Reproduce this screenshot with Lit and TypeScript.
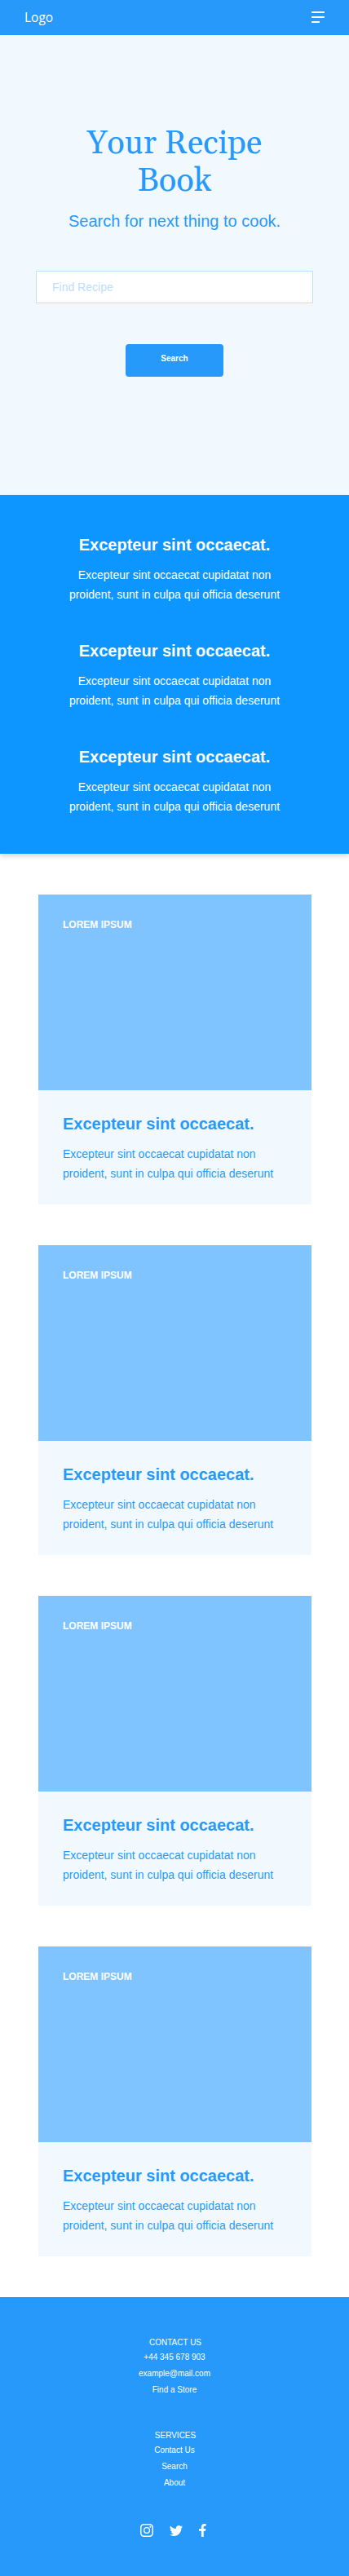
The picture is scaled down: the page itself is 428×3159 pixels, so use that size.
import { LitElement, html, css, svg } from "lit";
import { customElement } from "lit/decorators.js";

const HEADING = "Excepteur sint occaecat.";
const BODY = "Excepteur sint occaecat cupidatat non proident, sunt in culpa qui officia deserunt";

const linkGroups = [
  { title: "CONTACT US", links: ["+44 345 678 903", "example@mail.com", "Find a Store"] },
  { title: "SERVICES", links: ["Contact Us", "Search", "About"] },
];

const instagram = svg`<rect x="0.75" y="0.75" width="14.5" height="14.5" rx="3.9" fill="none" stroke="#fff" stroke-width="1.5"/><circle cx="8" cy="8" r="3.4" fill="none" stroke="#fff" stroke-width="1.4"/><circle cx="12.3" cy="3.7" r="1" fill="#fff"/>`;
const twitter = svg`<path fill="#fff" d="M16 3.54a6.6 6.6 0 0 1-1.89.52 3.3 3.3 0 0 0 1.44-1.82 6.6 6.6 0 0 1-2.08.8A3.28 3.28 0 0 0 7.88 6.03 9.32 9.32 0 0 1 1.11 2.6a3.28 3.28 0 0 0 1.02 4.38 3.3 3.3 0 0 1-1.49-.41v.04a3.28 3.28 0 0 0 2.63 3.22 3.3 3.3 0 0 1-1.48.06 3.28 3.28 0 0 0 3.07 2.28A6.6 6.6 0 0 1 0 13.52a9.3 9.3 0 0 0 5.03 1.48c6.04 0 9.34-5 9.34-9.34l-.01-.42A6.7 6.7 0 0 0 16 3.54z"/>`;
const facebook = svg`<path fill="#fff" d="M8.1 2.66h1.46V.11A18.9 18.9 0 0 0 7.43 0C5.33 0 3.88 1.33 3.88 3.76V6H1v2.86h2.88V16h2.84V8.86h2.36L9.44 6H6.72V4.04c0-.83.22-1.38 1.38-1.38z"/>`;

const socialIcons = [
  { icon: instagram, left: 0, width: 16 },
  { icon: twitter, left: 0, width: 16 },
  { icon: facebook, left: 1, width: 12 },
];

@customElement("app-root")
export class AppRoot extends LitElement {
  static styles = css`
    :host { display: block; background: #fff; font-family: "Liberation Sans", Arial, sans-serif; }
    * { box-sizing: border-box; }
    h1, h2, h3, p, ul { margin: 0; padding: 0; }
    svg { display: block; }
    .bar { height: 43px; padding: 0 30px 1px; display: flex; justify-content: space-between; align-items: center; background: #2699fb; }
    .logo { color: #fff; font: 15.5px/22px "Open Sans", "Noto Sans", sans-serif; }
    .hero { height: 564px; padding: 111px 44px 0; background: #f1f9ff; color: #2699fb; display: flex; flex-direction: column; align-items: center; text-align: center; }
    .title { width: 250px; font: 400 40px/46px Gelasio, Georgia, "Liberation Serif", serif; }
    .subtitle { margin-top: 13px; font-size: 20px; line-height: 24px; }
    .field { margin-top: 49px; width: 340px; height: 40px; padding: 0 19px; border: 1px solid #bce0fd; border-radius: 0; background: #fff; font: 14px "Liberation Sans", Arial, sans-serif; outline: none; }
    .field::placeholder { color: #bce0fd; opacity: 1; }
    .button { margin-top: 50px; width: 120px; height: 40px; padding: 0 0 4px; border: 0; border-radius: 4px; background: #2699fb; color: #fff; font: bold 10px/12px "Liberation Sans", Arial, sans-serif; display: block; text-align: center; }
    .features { height: 440px; padding-top: 49px; background: #0d96ff; color: #fff; display: flex; flex-direction: column; align-items: center; gap: 45px; text-align: center; box-shadow: 0 3px 6px rgba(0, 0, 0, 0.16); }
    .copy { width: 275px; display: flex; flex-direction: column; gap: 13px; }
    .heading { font-size: 20px; line-height: 24px; font-weight: 700; }
    .text { font-size: 14px; line-height: 24px; }
    .cards { padding: 50px 46px 50px 47px; display: flex; flex-direction: column; gap: 50px; }
    .picture { height: 240px; padding: 30px; background: #7fc4ff; color: #fff; font-size: 12px; line-height: 14px; font-weight: 700; }
    .details { height: 140px; padding: 29px 30px; background: #f1f9ff; color: #2699fb; }
    .footer { height: 342px; padding-top: 50px; background: #2699fb; color: #fff; display: flex; flex-direction: column; align-items: center; font-size: 10px; text-align: center; }
    .group { height: 114px; }
    .group-title { padding-left: 2px; font-size: 10px; line-height: 12px; font-weight: 400; }
    .links { list-style: none; margin-top: 2px; line-height: 20px; }
    .social { display: flex; gap: 20px; }
  `;

  private copy() {
    return html`<div class="copy"><h3 class="heading">${HEADING}</h3><p class="text">${BODY}</p></div>`;
  }

  render() {
    return html`
      <header class="bar">
        <span class="logo">Logo</span>
        <svg width="16" height="14" fill="#fff"><rect width="16" height="2"/><rect y="6" width="16" height="2"/><rect y="12" width="10" height="2"/></svg>
      </header>
      <section class="hero">
        <h1 class="title">Your Recipe Book</h1>
        <p class="subtitle">Search for next thing to cook.</p>
        <input class="field" placeholder="Find Recipe" />
        <button class="button">Search</button>
      </section>
      <section class="features">${[0, 1, 2].map(() => this.copy())}</section>
      <main class="cards">
        ${[0, 1, 2, 3].map(() => html`
          <article>
            <div class="picture">LOREM IPSUM</div>
            <div class="details">${this.copy()}</div>
          </article>`)}
      </main>
      <footer class="footer">
        ${linkGroups.map((g) => html`
          <div class="group">
            <h2 class="group-title">${g.title}</h2>
            <ul class="links">${g.links.map((l) => html`<li>${l}</li>`)}</ul>
          </div>`)}
        <div class="social">
          ${socialIcons.map((s) => html`<svg width=${s.width} height="16" viewBox="${s.left} 0 ${s.width} 16">${s.icon}</svg>`)}
        </div>
      </footer>`;
  }
}
